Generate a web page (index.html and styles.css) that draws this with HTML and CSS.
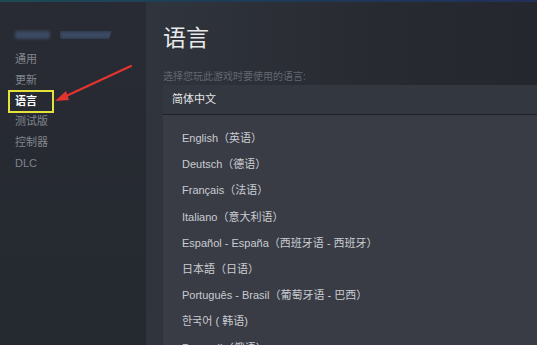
FILE: index.html
```html
<!DOCTYPE html>
<html lang="zh-CN">
<head>
    <meta charset="UTF-8">
    <meta name="viewport" content="width=device-width, initial-scale=1.0">
    <title>语言 - 属性</title>
    <link rel="stylesheet" href="styles.css">
</head>
<body>
    <div class="top-strip"></div>
    <div class="window">
        <div class="sidebar">
            <div class="game-name">
                <span class="blur blur-a"></span>
                <span class="blur blur-b"></span>
            </div>
            <ul class="nav">
                <li>通用</li>
                <li>更新</li>
                <li class="active"><span class="mark">语言</span></li>
                <li>测试版</li>
                <li>控制器</li>
                <li>DLC</li>
            </ul>
        </div>

        <div class="main">
            <h1>语言</h1>
            <p class="hint">选择您玩此游戏时要使用的语言:</p>
            <div class="select">简体中文</div>
            <ul class="lang-list">
                <li>English（英语）</li>
                <li>Deutsch（德语）</li>
                <li>Français（法语）</li>
                <li>Italiano（意大利语）</li>
                <li>Español - España（西班牙语 - 西班牙）</li>
                <li>日本語（日语）</li>
                <li>Português - Brasil（葡萄牙语 - 巴西）</li>
                <li>한국어 ( 韩语)</li>
                <li>Русский（俄语）</li>
            </ul>
        </div>
    </div>

    <svg class="arrow" width="140" height="110" viewBox="0 0 140 110">
        <line x1="131" y1="66" x2="64" y2="97" stroke="#e3342f" stroke-width="2.2" stroke-linecap="round"/>
        <polygon points="55,101 66,91 69,100" fill="#e3342f"/>
    </svg>
</body>
</html>
```

FILE: styles.css
```css
html, body {
    margin: 0;
    padding: 0;
}
body {
    width: 537px;
    height: 345px;
    overflow: hidden;
    background-color: #262a31;
    font-family: 'Liberation Sans', 'Noto Sans CJK SC', sans-serif;
    position: relative;
}
.top-strip {
    height: 2px;
    background: linear-gradient(to right, #1d4a55, #1f3b55 45%, #22305a);
}
.window {
    display: flex;
    height: 343px;
    overflow: hidden;
}
.sidebar {
    width: 146px;
    flex-shrink: 0;
    background: linear-gradient(to bottom, #282b33, #252930);
}
.game-name {
    display: flex;
    gap: 10px;
    padding: 29px 0 0 15px;
    height: 8px;
}
.blur {
    display: block;
    height: 8px;
    background-color: #3a4a62;
    filter: blur(1.5px);
    border-radius: 2px;
}
.blur-a {
    width: 35px;
}
.blur-b {
    width: 52px;
    clip-path: polygon(0 0, 100% 0, 94% 100%, 0 100%);
}
.nav {
    list-style: none;
    margin: 0;
    padding: 10px 0 0 0;
}
.nav li {
    height: 20.8px;
    line-height: 20.8px;
    font-size: 11px;
    color: #80858e;
    padding-left: 15px;
}
.nav li.active {
    padding-left: 8px;
}
.nav .mark {
    display: inline-block;
    box-sizing: border-box;
    width: 46px;
    height: 23px;
    line-height: 19px;
    margin-top: -1px;
    padding-left: 5px;
    border: 2px solid #e6e23c;
    color: #ffffff;
    font-weight: bold;
    vertical-align: top;
}
.main {
    flex: 1;
    display: flex;
    flex-direction: column;
    padding-left: 17px;
    background: linear-gradient(to right, #30343c, #272a31 60%, #24272d);
}
.main h1 {
    margin: 0;
    padding-top: 21px;
    height: 30px;
    line-height: 30px;
    font-size: 23px;
    font-weight: normal;
    color: #e8e9eb;
}
.hint {
    margin: 0;
    padding-top: 16px;
    height: 16px;
    line-height: 16px;
    font-size: 10px;
    color: #626873;
}
.select {
    height: 29px;
    line-height: 29px;
    padding-left: 9px;
    font-size: 11px;
    color: #e4e6e9;
    background-color: #33373f;
    border-bottom: 1px solid #1e2126;
}
.lang-list {
    flex: 1;
    list-style: none;
    margin: 0;
    padding: 10px 0 0 19px;
    background-color: #393c45;
    overflow: hidden;
}
.lang-list li {
    height: 26.2px;
    line-height: 26.2px;
    font-size: 11px;
    color: #c9ccd1;
}
.arrow {
    position: absolute;
    left: 0;
    top: 0;
}
```
